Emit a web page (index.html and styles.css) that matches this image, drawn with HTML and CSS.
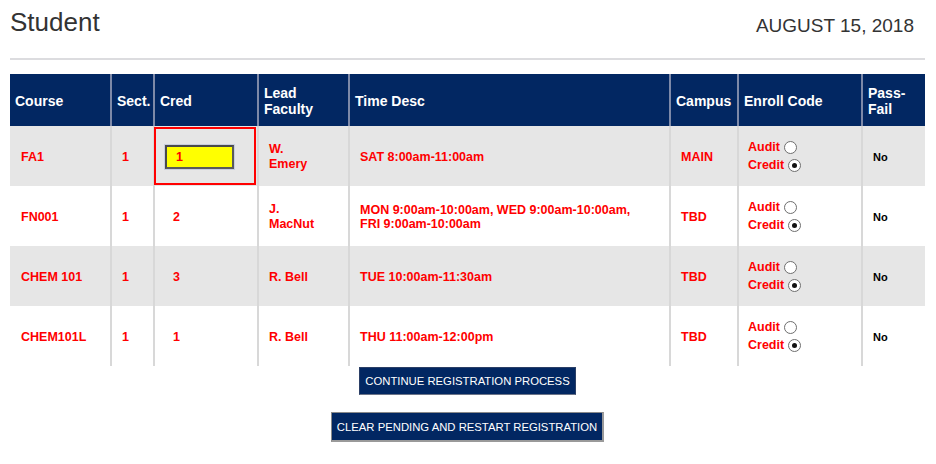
FILE: index.html
```html
<!DOCTYPE html>
<html>
<head>
<meta charset="utf-8">
<title>Student</title>
<link rel="stylesheet" href="styles.css">
</head>
<body>
<div class="page">
  <div class="top">
    <h1 class="title">Student</h1>
    <div class="date">AUGUST 15, 2018</div>
  </div>
  <div class="rule"></div>
  <table class="grid">
    <thead>
      <tr>
        <th class="c-course">Course</th>
        <th class="c-sect">Sect.</th>
        <th class="c-cred">Cred</th>
        <th class="c-lead">Lead<br>Faculty</th>
        <th class="c-time">Time Desc</th>
        <th class="c-campus">Campus</th>
        <th class="c-enroll">Enroll Code</th>
        <th class="c-pass">Pass-<br>Fail</th>
      </tr>
    </thead>
    <tbody>
      <tr class="odd">
        <td>FA1</td>
        <td>1</td>
        <td class="cred flagged"><span class="credbox">1</span></td>
        <td class="lead">W.<br>Emery</td>
        <td>SAT 8:00am-11:00am</td>
        <td>MAIN</td>
        <td class="enroll"><div class="opt">Audit<span class="radio"></span></div><div class="opt">Credit<span class="radio on"></span></div></td>
        <td class="pf">No</td>
      </tr>
      <tr>
        <td>FN001</td>
        <td>1</td>
        <td class="cred"><span class="credval">2</span></td>
        <td class="lead">J.<br>MacNut</td>
        <td>MON 9:00am-10:00am, WED 9:00am-10:00am,<br>FRI 9:00am-10:00am</td>
        <td>TBD</td>
        <td class="enroll"><div class="opt">Audit<span class="radio"></span></div><div class="opt">Credit<span class="radio on"></span></div></td>
        <td class="pf">No</td>
      </tr>
      <tr class="odd">
        <td>CHEM 101</td>
        <td>1</td>
        <td class="cred"><span class="credval">3</span></td>
        <td class="lead">R. Bell</td>
        <td>TUE 10:00am-11:30am</td>
        <td>TBD</td>
        <td class="enroll"><div class="opt">Audit<span class="radio"></span></div><div class="opt">Credit<span class="radio on"></span></div></td>
        <td class="pf">No</td>
      </tr>
      <tr>
        <td>CHEM101L</td>
        <td>1</td>
        <td class="cred"><span class="credval">1</span></td>
        <td class="lead">R. Bell</td>
        <td>THU 11:00am-12:00pm</td>
        <td>TBD</td>
        <td class="enroll"><div class="opt">Audit<span class="radio"></span></div><div class="opt">Credit<span class="radio on"></span></div></td>
        <td class="pf">No</td>
      </tr>
    </tbody>
  </table>
  <div class="actions">
    <button class="btn btn-continue">CONTINUE REGISTRATION PROCESS</button>
    <button class="btn btn-clear">CLEAR PENDING AND RESTART REGISTRATION</button>
  </div>
</div>
</body>
</html>
```
FILE: styles.css
```css
html, body {
  margin: 0;
  padding: 0;
  background: #ffffff;
}
body {
  font-family: "Liberation Sans", Arial, sans-serif;
}
.page {
  width: 915px;
  padding: 0 11px 0 10px;
}
.top {
  display: flex;
  justify-content: space-between;
  align-items: flex-start;
  height: 58px;
}
.title {
  margin: 7px 0 0 0;
  font-size: 26px;
  line-height: 30px;
  font-weight: normal;
  color: #333333;
}
.date {
  margin: 15px 11px 0 0;
  font-size: 19px;
  line-height: 22px;
  color: #333333;
}
.rule {
  height: 0;
  border-top: 2px solid #dcdcdf;
  margin-bottom: 14px;
}
.grid {
  width: 915px;
  table-layout: fixed;
  border-collapse: separate;
  border-spacing: 0;
}
.grid th, .grid td {
  box-sizing: border-box;
  text-align: left;
  vertical-align: middle;
}
.grid th {
  height: 52px;
  background: #022762;
  color: #ffffff;
  font-size: 14px;
  line-height: 16px;
  font-weight: bold;
  padding: 1px 0 0 5px;
  border-left: 2px solid #7d89a8;
}
.grid th:first-child { border-left: 0; }
.c-course { width: 100px; }
.c-sect { width: 43px; }
.c-cred { width: 104px; }
.c-lead { width: 91px; }
.c-time { width: 321px; }
.c-campus { width: 68px; }
.c-enroll { width: 124px; }
.c-pass { width: 64px; }
.grid td {
  height: 60px;
  padding: 2px 0 0 10px;
  border-left: 2px solid #d8d8d8;
  color: #ff0000;
  font-size: 12.5px;
  line-height: 14px;
  font-weight: bold;
}
.grid td:first-child { border-left: 0; padding-left: 11px; }
.grid tr.odd td { background: #e6e6e6; }
.grid td.lead { line-height: 15px; }
.grid td.cred { padding-left: 10px; }
.credval { padding-left: 8px; }
.flagged {
  outline: 2px solid #ff0000;
  outline-offset: -3px;
}
.credbox {
  display: block;
  box-sizing: border-box;
  width: 69px;
  height: 24px;
  margin-top: 0;
  background: #ffff00;
  border: 2px solid #4a4a4a;
  border-right-color: #5a5a5a;
  border-bottom-color: #5a5a5a;
  box-shadow: 0 0 0 1px #c8cde0;
  padding-left: 9px;
  line-height: 20px;
  color: #ff0000;
  font-size: 12.5px;
  font-weight: bold;
}
.grid td.enroll {
  padding-left: 9px;
  padding-top: 0;
  font-size: 12.5px;
}
.opt {
  display: flex;
  align-items: center;
  height: 18px;
}
.radio {
  display: inline-block;
  box-sizing: border-box;
  width: 13px;
  height: 13px;
  margin-left: 4px;
  border: 1px solid #6e6e6e;
  border-radius: 50%;
  background: #ffffff;
  position: relative;
}
.radio.on::after {
  content: "";
  position: absolute;
  left: 3px;
  top: 3px;
  width: 5px;
  height: 5px;
  border-radius: 50%;
  background: #111111;
}
.grid td.pf {
  color: #000000;
  font-size: 11px;
}
.actions {
  display: flex;
  flex-direction: column;
  align-items: center;
  gap: 17px;
  padding-top: 1px;
}
.btn {
  font-family: "Liberation Sans", Arial, sans-serif;
  font-size: 11.3px;
  color: #ffffff;
  background: #022762;
  margin: 0;
  cursor: pointer;
}
.btn-continue {
  height: 28px;
  padding: 0 5px;
  border: 1px solid #2b3f66;
  border-bottom-color: #6c7488;
}
.btn-clear {
  height: 30px;
  padding: 0 5px;
  border: 1px solid #8a8a8a;
  border-right-width: 2px;
  border-bottom-width: 2px;
  border-right-color: #9a9a9a;
  border-bottom-color: #9a9a9a;
}
```
